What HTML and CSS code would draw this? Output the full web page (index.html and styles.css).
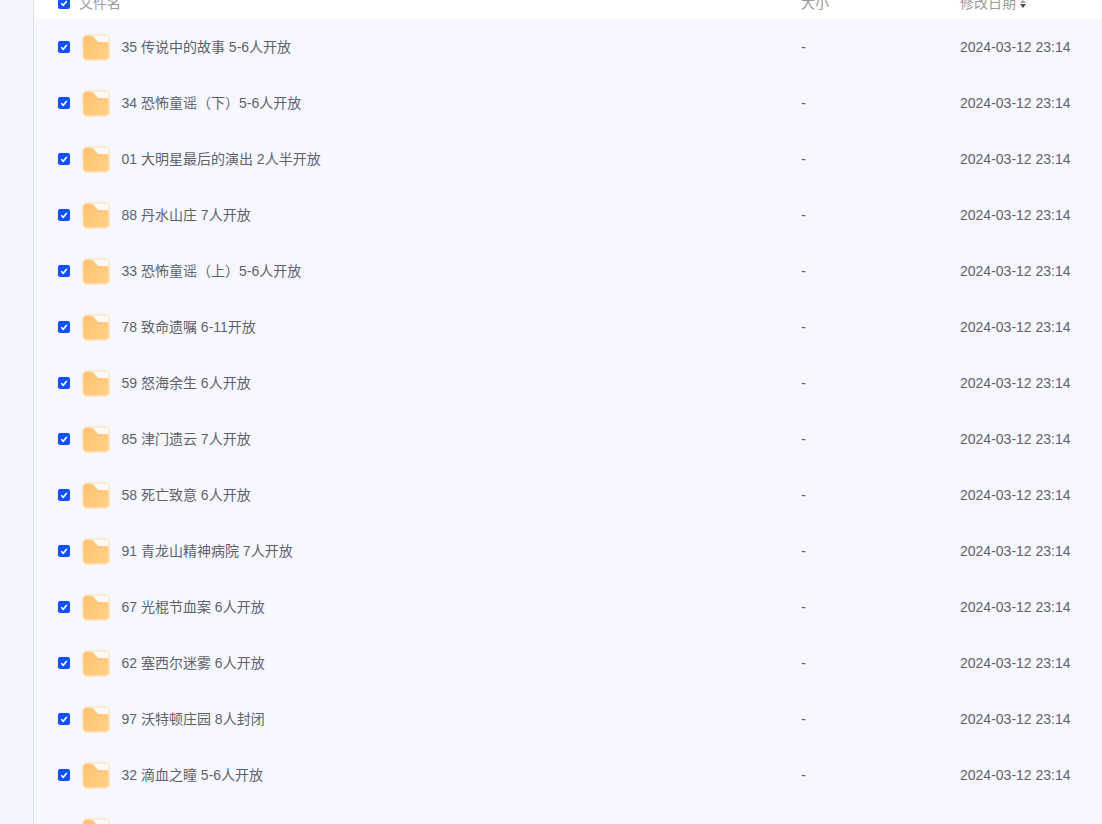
FILE: index.html
```html
<!DOCTYPE html>
<html lang="zh-CN">
<head>
<meta charset="utf-8">
<title>文件列表</title>
<link rel="stylesheet" href="styles.css">
</head>
<body>
<svg class="defs" width="0" height="0" aria-hidden="true">
  <defs>
    <linearGradient id="fg" x1="0" y1="0" x2="1" y2="1">
      <stop offset="0" stop-color="#ffc06f"/>
      <stop offset="1" stop-color="#ffd387"/>
    </linearGradient>
    <symbol id="folder" viewBox="0 0 28 27">
      <rect width="28" height="27" rx="5" fill="#ffe6c6"/>
      <path d="M9 1.500H24a2.500 2.500 0 0 1 2.500 2.500V9H16Z" fill="#fffaf3"/>
      <path d="M1.500 5a3 3 0 0 1 3-3H9.500q1.500 0 2.500 1.300L15 7q.8 1 2 1H26.500V22.500A3 3 0 0 1 23.500 25.500H4.500A3 3 0 0 1 1.500 22.500Z" fill="url(#fg)"/>
    </symbol>
    <symbol id="check" viewBox="0 0 12 12">
      <rect width="12" height="12" rx="2" fill="#1352fb"/>
      <path d="M3.200 6.200 5.200 8.300 8.800 4" fill="none" stroke="#fff" stroke-width="1.600"/>
    </symbol>
  </defs>
</svg>
<div class="page">
  <aside class="rail"></aside>
  <main class="list">
    <div class="row head">
      <svg class="box"><use href="#check"/></svg>
      <span class="name-head">文件名</span>
      <span class="size">大小</span>
      <span class="date">修改日期<span class="sort"><i class="up"></i><i class="down"></i></span></span>
    </div>
    <div class="row"><svg class="box"><use href="#check"/></svg><svg class="folder"><use href="#folder"/></svg><span class="name">35 传说中的故事 5-6人开放</span><span class="size">-</span><span class="date">2024-03-12 23:14</span></div>
    <div class="row"><svg class="box"><use href="#check"/></svg><svg class="folder"><use href="#folder"/></svg><span class="name">34 恐怖童谣（下）5-6人开放</span><span class="size">-</span><span class="date">2024-03-12 23:14</span></div>
    <div class="row"><svg class="box"><use href="#check"/></svg><svg class="folder"><use href="#folder"/></svg><span class="name">01 大明星最后的演出 2人半开放</span><span class="size">-</span><span class="date">2024-03-12 23:14</span></div>
    <div class="row"><svg class="box"><use href="#check"/></svg><svg class="folder"><use href="#folder"/></svg><span class="name">88 丹水山庄 7人开放</span><span class="size">-</span><span class="date">2024-03-12 23:14</span></div>
    <div class="row"><svg class="box"><use href="#check"/></svg><svg class="folder"><use href="#folder"/></svg><span class="name">33 恐怖童谣（上）5-6人开放</span><span class="size">-</span><span class="date">2024-03-12 23:14</span></div>
    <div class="row"><svg class="box"><use href="#check"/></svg><svg class="folder"><use href="#folder"/></svg><span class="name">78 致命遗嘱 6-11开放</span><span class="size">-</span><span class="date">2024-03-12 23:14</span></div>
    <div class="row"><svg class="box"><use href="#check"/></svg><svg class="folder"><use href="#folder"/></svg><span class="name">59 怒海余生 6人开放</span><span class="size">-</span><span class="date">2024-03-12 23:14</span></div>
    <div class="row"><svg class="box"><use href="#check"/></svg><svg class="folder"><use href="#folder"/></svg><span class="name">85 津门遗云 7人开放</span><span class="size">-</span><span class="date">2024-03-12 23:14</span></div>
    <div class="row"><svg class="box"><use href="#check"/></svg><svg class="folder"><use href="#folder"/></svg><span class="name">58 死亡致意 6人开放</span><span class="size">-</span><span class="date">2024-03-12 23:14</span></div>
    <div class="row"><svg class="box"><use href="#check"/></svg><svg class="folder"><use href="#folder"/></svg><span class="name">91 青龙山精神病院 7人开放</span><span class="size">-</span><span class="date">2024-03-12 23:14</span></div>
    <div class="row"><svg class="box"><use href="#check"/></svg><svg class="folder"><use href="#folder"/></svg><span class="name">67 光棍节血案 6人开放</span><span class="size">-</span><span class="date">2024-03-12 23:14</span></div>
    <div class="row"><svg class="box"><use href="#check"/></svg><svg class="folder"><use href="#folder"/></svg><span class="name">62 塞西尔迷雾 6人开放</span><span class="size">-</span><span class="date">2024-03-12 23:14</span></div>
    <div class="row"><svg class="box"><use href="#check"/></svg><svg class="folder"><use href="#folder"/></svg><span class="name">97 沃特顿庄园 8人封闭</span><span class="size">-</span><span class="date">2024-03-12 23:14</span></div>
    <div class="row"><svg class="box"><use href="#check"/></svg><svg class="folder"><use href="#folder"/></svg><span class="name">32 滴血之瞳 5-6人开放</span><span class="size">-</span><span class="date">2024-03-12 23:14</span></div>
    <div class="row"><span class="box"></span><svg class="folder"><use href="#folder"/></svg></div>
  </main>
</div>
</body>
</html>
```
FILE: styles.css
```css
* { box-sizing: border-box; }
html, body { margin: 0; height: 100%; overflow: hidden; }
body { font: 14px "Liberation Sans", "Noto Sans CJK SC", sans-serif; color: #60616a; background: #f7f8ff; }
.defs { position: absolute; }
.page { display: flex; height: 824px; overflow: hidden; }
.rail { flex: 0 0 34px; background: #f3f6fe; border-right: 1px solid #dfe1ec; }
.list { flex: 1; min-width: 0; margin-top: -13px; }
.row { display: flex; align-items: center; height: 56px; padding-left: 24px; position: relative; }
.row::after { content: ""; position: absolute; left: 24px; right: 0; bottom: 0; height: 1px; background: #f4f5fc; }
.head { height: 32px; background: #fff; color: #9a9a9e; }
.head::after { display: none; }
.box { flex: 0 0 12px; width: 12px; height: 12px; }
.folder { flex: 0 0 28px; width: 28px; height: 27px; margin-left: 12px; }
.name { margin-left: 11.500px; width: 679.500px; white-space: nowrap; padding-bottom: 2px; }
.name-head { margin-left: 9px; width: 722px; padding-bottom: 2px; }
.size { width: 159px; }
.date { white-space: nowrap; display: flex; align-items: center; }
.head .size, .head .date { padding-bottom: 2px; }
.sort { display: inline-flex; flex-direction: column; gap: 1px; margin-left: 4px; margin-top: 3px; }
.sort i { display: block; width: 0; height: 0; border-left: 3.500px solid transparent; border-right: 3.500px solid transparent; }
.sort .up { border-bottom: 3px solid #a0a0a0; }
.sort .down { border-top: 4px solid #4a4a4a; }
```
